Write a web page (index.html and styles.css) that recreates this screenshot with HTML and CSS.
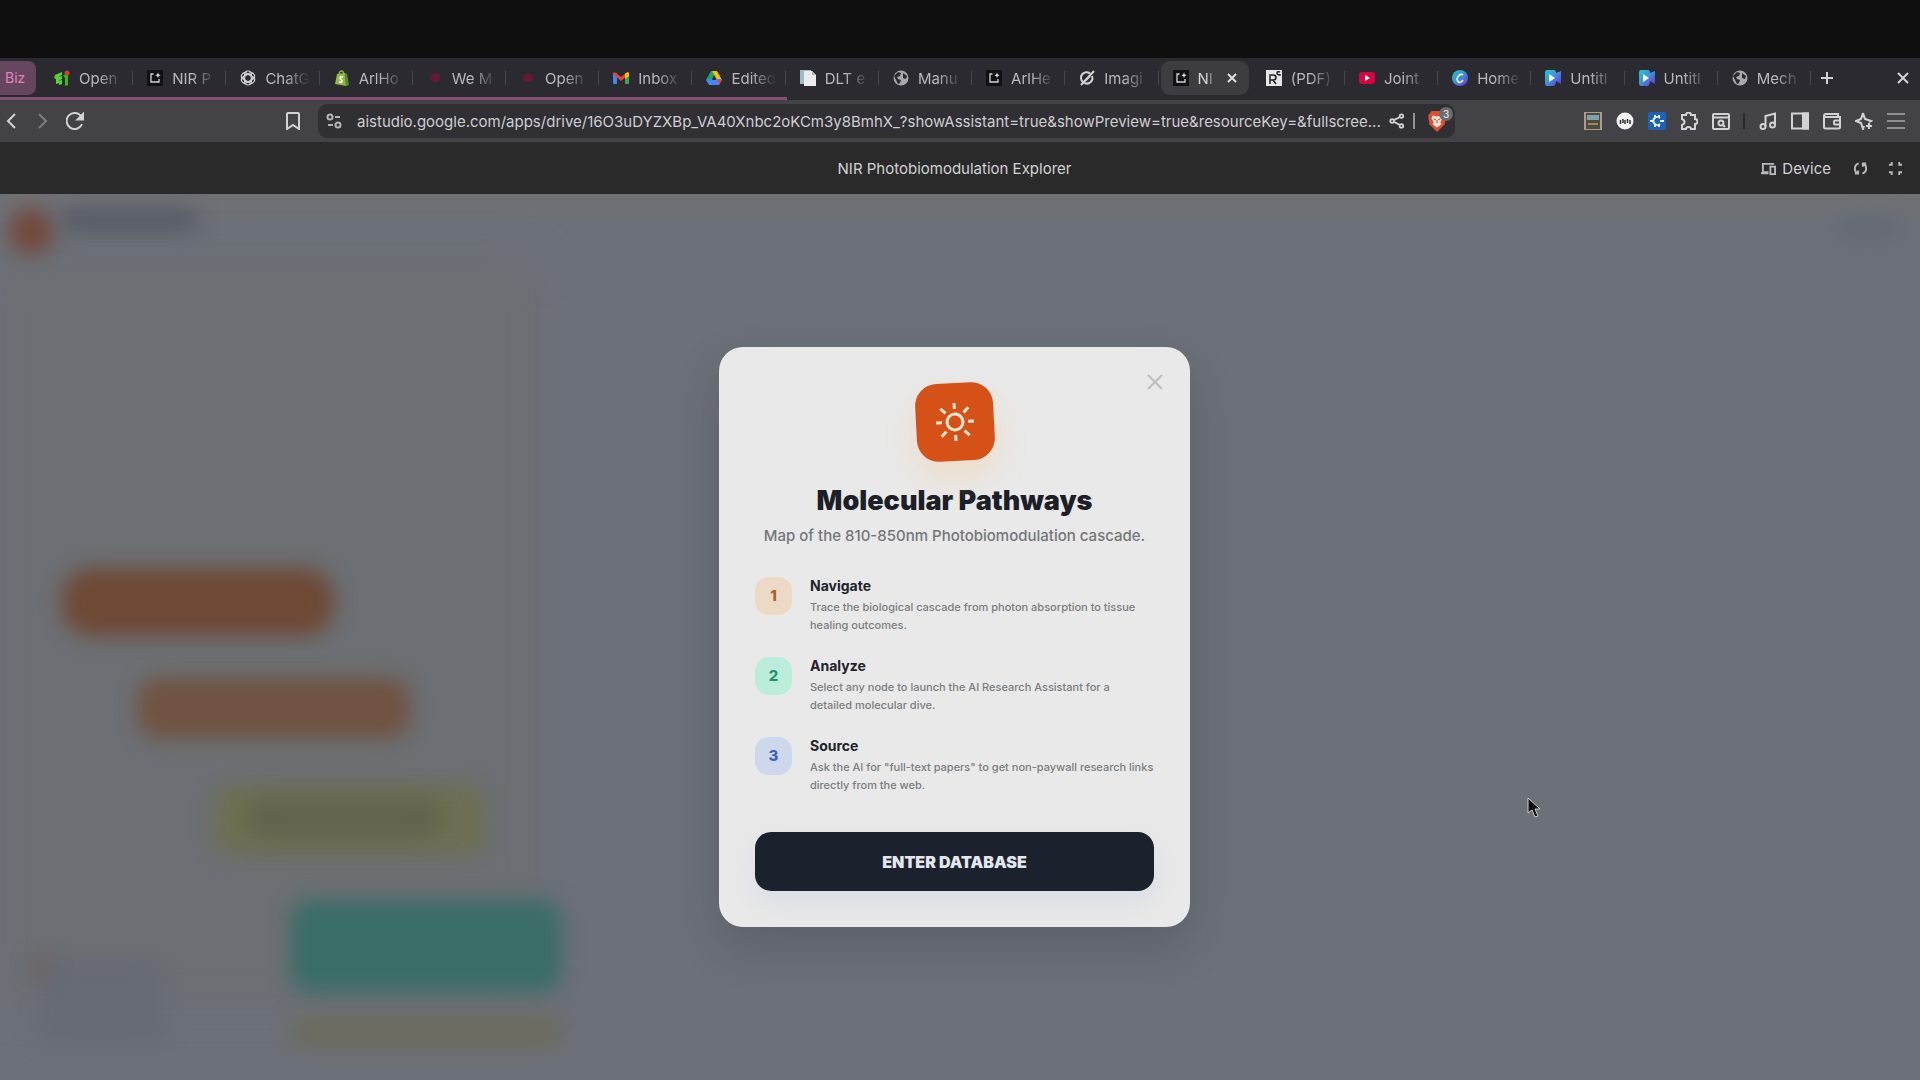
FILE: index.html
```html
<!DOCTYPE html>
<html lang="en">
<head>
  <meta charset="UTF-8">
  <meta name="viewport" content="width=device-width, initial-scale=1.0">
  <title>NIR Photobiomodulation Explorer</title>
  <link rel="stylesheet" href="styles.css">
</head>
<body>
  <!-- shared icons -->
  <svg class="defs" width="0" height="0" aria-hidden="true">
    <defs>
      <linearGradient id="canva" x1="0" y1="0" x2="1" y2="1">
        <stop offset="0" stop-color="#22c7cf"/>
        <stop offset="0.5" stop-color="#3f8fd8"/>
        <stop offset="1" stop-color="#7426dd"/>
      </linearGradient>
      <symbol id="i-globe" viewBox="0 0 16 16">
        <circle cx="8" cy="8" r="7.500" fill="#a9a9ac"/>
        <path d="M1 6l4-4 3 1-1 3-3 1 1 2 3 1-1 3-2 1zM10 3l4 3-1 3-3-1z" fill="#2b2a30"/>
      </symbol>
      <symbol id="i-studio" viewBox="0 0 16 16">
        <rect width="16" height="16" fill="#111113"/>
        <path d="M6.500 4H4v8h8V9" fill="none" stroke="#d4d4d6" stroke-width="1.300"/>
        <path d="M11 2.500l.8 1.900 1.900.8-1.900.8-.8 1.900-.8-1.900L8.300 5.200l1.900-.8z" fill="#e5e5e6"/>
      </symbol>
      <symbol id="i-maple" viewBox="0 0 16 16">
        <path d="M8 2l2 3 3-1-1 4 2 1-4 3H6L2 9l2-1-1-4 3 1z" fill="#651a30"/>
      </symbol>
      <symbol id="i-video" viewBox="0 0 16 16">
        <path d="M2 0h7q2 0 2 3l5-2v13l-5-3q0 5-3 5H2q-2 0-2-3V3q0-3 2-3z" fill="url(#canva)"/>
        <path d="M4 4v8l6-4z" fill="#fff"/>
      </symbol>
    </defs>
  </svg>

  <header class="browser">
    <div class="tab-strip">
      <span class="tab-group">Biz</span>
      <nav class="tabs" aria-label="Open tabs">
        <a class="tab" href="#"><svg class="favicon" viewBox="0 0 16 16"><path d="M1 5l7-3v3L4 7l4-1v3L4 11l4-1v4l-3 1v-2l-3 1V9L0 8z" fill="#56d52e"/><path d="M9 5l5-1v11l-3 1V8z" fill="#3cb424"/><circle cx="13" cy="3" r="2.500" fill="#d83b2c"/></svg><span>Open</span></a>
        <a class="tab" href="#"><svg class="favicon"><use href="#i-studio"/></svg><span>NIR P</span></a>
        <a class="tab" href="#"><svg class="favicon" viewBox="0 0 16 16" fill="none" stroke="#d0d0d2" stroke-width="1.200"><rect x="4.500" y="1" width="7" height="11" rx="3.500"/><rect x="4.500" y="1" width="7" height="11" rx="3.500" transform="rotate(60 8 8)"/><rect x="4.500" y="1" width="7" height="11" rx="3.500" transform="rotate(120 8 8)"/><rect x="4.500" y="1" width="7" height="11" rx="3.500" transform="rotate(180 8 8)"/><rect x="4.500" y="1" width="7" height="11" rx="3.500" transform="rotate(240 8 8)"/><rect x="4.500" y="1" width="7" height="11" rx="3.500" transform="rotate(300 8 8)"/></svg><span>ChatG</span></a>
        <a class="tab" href="#"><svg class="favicon" viewBox="0 0 16 16"><path d="M3 4l8-1 1 13-11-2z" fill="#8fb845"/><path d="M11 3l2 1 2 11-3 1z" fill="#5a8a34"/><path d="M5 5q0-4 3-4 1 0 2 3" fill="none" stroke="#8fb845" stroke-width="1.300"/><path d="M9 7q-3-1-3 1c0 2 2 1 2 3q0 2-3 1" fill="none" stroke="#fff" stroke-width="1.500"/></svg><span>ArlHo</span></a>
        <a class="tab" href="#"><svg class="favicon"><use href="#i-maple"/></svg><span>We M</span></a>
        <a class="tab" href="#"><svg class="favicon"><use href="#i-maple"/></svg><span>Open</span></a>
        <a class="tab" href="#"><svg class="favicon" viewBox="0 0 16 16"><path d="M0 3h4v11H1q-1 0-1-1z" fill="#4285f4"/><path d="M12 3h4v10q0 1-1 1h-3z" fill="#34a853"/><path d="M0 4q0-3 3-1l5 4 5-4q3-2 3 1l-8 7z" fill="#ea4335"/><path d="M12 4l1-1q3-2 3 1v2l-4 3z" fill="#fbbc04"/></svg><span>Inbox</span></a>
        <a class="tab" href="#"><svg class="favicon" viewBox="0 0 16 16"><path d="M5 1h5L4 14 0 10z" fill="#1fa463"/><path d="M6 1h5l5 9h-5z" fill="#fbbc04"/><path d="M0 10l3-1h13l-3 6H3z" fill="#4285f4"/><path d="M11.500 10H16l-3 5z" fill="#ea4335"/><path d="M8 6l2 4H6z" fill="#2b2a30"/></svg><span>Edited</span></a>
        <a class="tab" href="#"><svg class="favicon" viewBox="0 0 16 16"><path d="M0 0h11v14H0z" fill="#9dbdca"/><path d="M4 1h8l4 4v11H4z" fill="#ececee"/><path d="M12 1v4h4z" fill="#b2b5bb"/></svg><span>DLT e</span></a>
        <a class="tab" href="#"><svg class="favicon"><use href="#i-globe"/></svg><span>Manu</span></a>
        <a class="tab" href="#"><svg class="favicon"><use href="#i-studio"/></svg><span>ArlHe</span></a>
        <a class="tab" href="#"><svg class="favicon" viewBox="0 0 16 16" fill="none" stroke="#d4d4d6" stroke-width="2"><path d="M11 3.500A5.500 5.500 0 0 0 4 12M13 6a5.500 5.500 0 0 1-7.500 7M2 15L15 1M6 11l5-5"/></svg><span>Imagi</span></a>
        <a class="tab active" href="#"><svg class="favicon"><use href="#i-studio"/></svg><span>NI</span><svg class="tab-close" viewBox="0 0 10 10"><path d="M1 1l8 8M9 1L1 9"/></svg></a>
        <a class="tab" href="#"><svg class="favicon" viewBox="0 0 16 16"><rect width="16" height="16" fill="#e6e6e6"/><path d="M4 14V5h3q3 0 3 2.500T7 10H4m3 0l3 4M14 2q-3-1-3 1t3 2V4" fill="none" stroke="#222" stroke-width="1.500"/></svg><span>(PDF)</span></a>
        <a class="tab" href="#"><svg class="favicon" viewBox="0 0 16 16"><rect y="2" width="16" height="12" rx="3" fill="#d4053f"/><path d="M6 5v6l5-3z" fill="#fff"/></svg><span>Joint</span></a>
        <a class="tab" href="#"><svg class="favicon" viewBox="0 0 16 16"><circle cx="8" cy="8" r="8" fill="url(#canva)"/><path d="M11 5Q9 3 6.500 6T6 11.500 11 10" fill="none" stroke="#fff" stroke-width="1.500"/></svg><span>Home</span></a>
        <a class="tab" href="#"><svg class="favicon"><use href="#i-video"/></svg><span>Untitl</span></a>
        <a class="tab" href="#"><svg class="favicon"><use href="#i-video"/></svg><span>Untitl</span></a>
        <a class="tab" href="#"><svg class="favicon"><use href="#i-globe"/></svg><span>Mech</span></a>
      </nav>
      <div class="window-buttons">
        <button class="icon-btn" aria-label="New tab"><svg viewBox="0 0 18 18"><path d="M9 3v12M3 9h12"/></svg></button>
        <button class="icon-btn" aria-label="Close window"><svg viewBox="0 0 18 18"><path d="M4 4l10 10M14 4L4 14"/></svg></button>
      </div>
    </div>

    <div class="toolbar">
      <div class="nav-buttons">
        <button class="icon-btn" aria-label="Back"><svg viewBox="0 0 18 18"><path d="M13 2L6 9l7 7"/></svg></button>
        <button class="icon-btn dim" aria-label="Forward"><svg viewBox="0 0 18 18"><path d="M5 2l7 7-7 7"/></svg></button>
        <button class="icon-btn" aria-label="Reload"><svg viewBox="0 0 18 18"><path d="M15.500 5A8 8 0 1 0 16 12"/><path d="M17 2v5.500h-5.500z" fill="currentColor"/></svg></button>
        <button class="icon-btn bookmark" aria-label="Bookmark"><svg viewBox="0 0 18 18"><path d="M3 2q0-1 1-1h10q1 0 1 1v15l-6-4-6 4z"/></svg></button>
      </div>
      <div class="address">
        <svg class="site-info" viewBox="0 0 16 16"><circle cx="4" cy="4" r="2.500"/><path d="M9 4h5M2 12h5"/><circle cx="12" cy="12" r="2.500"/></svg>
        <input type="text" aria-label="Address" value="aistudio.google.com/apps/drive/16O3uDYZXBp_VA40Xnbc2oKCm3y8BmhX_?showAssistant=true&amp;showPreview=true&amp;resourceKey=&amp;fullscree...">
        <button class="icon-btn share" aria-label="Share"><svg viewBox="0 0 18 18"><circle cx="3.500" cy="9" r="2"/><circle cx="14" cy="3.500" r="2"/><circle cx="14" cy="14.500" r="2"/><path d="M5.500 8l7-3.500M5.500 10l7 3.500"/></svg></button>
        <span class="divider"></span>
        <button class="shield" aria-label="Shields">
          <svg viewBox="0 0 18 20"><path d="M4 1h10l3 4-1 8-7 7-7-7-1-8z" fill="#d9502b"/><path d="M5 5l4 1 4-1 1 3-2 3 1 2-4 3-4-3 1-2-2-3z" fill="#f6e3dc"/><path d="M6 8l2 1M12 8l-2 1M9 9v3" stroke="#d9502b"/></svg>
          <span class="badge">3</span>
        </button>
      </div>
      <div class="extensions">
        <button class="icon-btn solid" aria-label="Reader"><svg viewBox="0 0 18 18"><rect width="18" height="18" fill="#b39b83"/><rect x="2" y="1" width="14" height="16" fill="#4b4a45"/><rect x="3" y="3" width="12" height="5" fill="#80a0ad"/><path d="M4 11h10v2H4z" fill="#a28a41"/></svg></button>
        <button class="icon-btn solid" aria-label="Audio"><svg viewBox="0 0 18 18"><circle cx="9" cy="9" r="8.500" fill="#f1f1f1"/><path d="M4.500 12V8M7 11V7M9 12V8M11.500 11V7M14 12V8" stroke="#333" stroke-width="1.500"/></svg></button>
        <button class="icon-btn solid" aria-label="Capture"><svg viewBox="0 0 18 18"><rect width="18" height="18" rx="2" fill="#1d62b8"/><path d="M12 6a4 4 0 1 0 0 6M7 3v3M7 12v3M2 9h3M12 9h4M11 3v3M11 12v3" stroke="#e4f0fb" stroke-width="2"/></svg></button>
        <button class="icon-btn" aria-label="Extensions"><svg viewBox="0 0 18 18"><path d="M2 3h4q0-2.500 2.500-2.500T11 3h4v4q2.500 0 2.500 2.500T15 12v5h-4q0-2-2.500-2T6 17H2v-4q2.500-1 2.500-3T2 7z"/></svg></button>
        <button class="icon-btn" aria-label="Search page"><svg viewBox="0 0 18 18"><rect x="1" y="2" width="16" height="15" rx="1"/><path d="M1 5.500h16M11 13l2 2"/><circle cx="9" cy="11" r="2.500"/></svg></button>
        <span class="divider"></span>
        <button class="icon-btn" aria-label="Media"><svg viewBox="0 0 18 18"><path d="M6.500 14.500V4L16 1.500V13"/><circle cx="4" cy="14.500" r="2.500"/><circle cx="13.500" cy="13" r="2.500"/></svg></button>
        <button class="icon-btn" aria-label="Sidebar"><svg viewBox="0 0 18 18"><rect x="1" y="1.500" width="16" height="15"/><path d="M12 1.500h5v15h-5z" fill="currentColor"/></svg></button>
        <button class="icon-btn" aria-label="Wallet"><svg viewBox="0 0 18 18"><path d="M15 5V2H3Q1 2 1 4v11q0 1.500 2 1.500h12q2 0 2-1.500V5H3Q1 5 1 3.500M17 8.500h-5q-1 0-1 1v2q0 1 1 1h5"/></svg></button>
        <button class="icon-btn" aria-label="Assistant"><svg viewBox="0 0 18 18"><path d="M8 1l2 6 6 2-2 1M8 1L6 7 1 9l5 2 2 6 1-3M14 11v6M11 14h6"/></svg></button>
        <button class="icon-btn menu" aria-label="Menu"><svg viewBox="0 0 18 18"><path d="M0 2h18M0 9h18M0 16h18"/></svg></button>
      </div>
    </div>
  </header>

  <div class="app-bar">
    <h1>NIR Photobiomodulation Explorer</h1>
    <div class="app-actions">
      <button class="device"><svg viewBox="0 0 16 16"><path d="M14 3H2v9h6M0 13h8"/><rect x="10" y="6" width="5" height="8"/></svg>Device</button>
      <button class="icon-btn" aria-label="Refresh"><svg viewBox="0 0 16 16"><path d="M6 2.500Q2 4 2 8t3 5.500M2 13.500h3.500V10M10 13.500q4-1.500 4-5.500T11 2.500M14 2.500h-3.500V6"/></svg></button>
      <button class="icon-btn" aria-label="Exit full screen"><svg viewBox="0 0 16 16"><path d="M4 1v3H1M12 1v3h3M4 15v-3H1M12 15v-3h3"/></svg></button>
    </div>
  </div>

  <main class="stage">
    <!-- pathway map behind the overlay -->
    <div class="map" aria-hidden="true">
      <div class="blob lane"></div>
      <div class="blob logo"></div>
      <div class="blob brand"></div>
      <div class="blob user"></div>
      <div class="blob node photon"></div>
      <div class="blob node absorb"></div>
      <div class="blob node signal"></div>
      <div class="blob node signal-text"></div>
      <div class="blob node tissue"></div>
      <div class="blob node next"></div>
      <div class="blob legend"></div>
      <div class="blob dot"></div>
    </div>

    <section class="modal" role="dialog" aria-labelledby="modal-title">
      <button class="close" aria-label="Close"><svg viewBox="0 0 16 16"><path d="M1 1l14 14M15 1L1 15"/></svg></button>
      <div class="sun">
        <svg viewBox="0 0 40 40"><circle cx="20" cy="20" r="8"/><path d="M20 1v6M20 33v6M1 20h6M33 20h6M6 6l5 5M29 29l5 5M6 34l5-5M29 11l5-5"/></svg>
      </div>
      <h2 id="modal-title">Molecular Pathways</h2>
      <p class="subtitle">Map of the 810-850nm Photobiomodulation cascade.</p>
      <ol class="steps">
        <li>
          <span class="num orange">1</span>
          <div>
            <h3>Navigate</h3>
            <p>Trace the biological cascade from photon absorption to tissue healing outcomes.</p>
          </div>
        </li>
        <li>
          <span class="num green">2</span>
          <div>
            <h3>Analyze</h3>
            <p>Select any node to launch the AI Research Assistant for a detailed molecular dive.</p>
          </div>
        </li>
        <li>
          <span class="num blue">3</span>
          <div>
            <h3>Source</h3>
            <p>Ask the AI for "full-text papers" to get non-paywall research links directly from the web.</p>
          </div>
        </li>
      </ol>
      <button class="enter">ENTER DATABASE</button>
    </section>

    <svg class="cursor" viewBox="0 0 14 22" aria-hidden="true"><path d="M1 1v15l4-3 3 7 3-1-3-7h5z"/></svg>
  </main>
</body>
</html>
```
FILE: styles.css
```css
* {
  box-sizing: border-box;
}
body {
  margin: 0;
  min-height: 100vh;
  display: flex;
  flex-direction: column;
  padding-top: 58px;
  background: #0f0f0f;
  font-family: Inter, "Liberation Sans", sans-serif;
  color: #d2d2d4;
}
h1, h2, h3, p, ol {
  margin: 0;
  padding: 0;
}
button {
  border: none;
  background: none;
  padding: 0;
  color: inherit;
  font-family: inherit;
  cursor: pointer;
}
svg {
  flex: none;
}
.defs {
  position: absolute;
}
.icon-btn {
  display: flex;
}
.icon-btn svg {
  width: 18px;
  height: 18px;
  fill: none;
  stroke: currentColor;
  stroke-width: 2;
}
.icon-btn.solid svg {
  stroke: none;
}
.icon-btn.dim {
  color: #7d7c80;
}

/* Tab strip */
.tab-strip {
  display: flex;
  align-items: center;
  height: 42px;
  padding-bottom: 2px;
  background: linear-gradient(#855078, #855078) left bottom / 41% 3px no-repeat #2b2a30;
}
.tab-group {
  width: 36px;
  height: 34px;
  line-height: 34px;
  padding-left: 5px;
  border-radius: 0 8px 8px 0;
  background: #65465f;
  color: #e283b8;
  font-size: 14px;
}
.tabs {
  flex: 1;
  display: grid;
  grid-auto-flow: column;
  grid-auto-columns: minmax(0, 1fr);
  gap: 5px;
  min-width: 0;
  margin-left: 6px;
}
.tab {
  position: relative;
  height: 34px;
  display: flex;
  align-items: center;
  gap: 9px;
  padding: 0 2px 0 12px;
  border-radius: 9px;
  color: #b9b9bc;
  font-size: 15px;
  text-decoration: none;
}
.tab::after {
  content: "";
  position: absolute;
  right: -3px;
  width: 1px;
  height: 14px;
  background: #47464b;
}
.tab span {
  flex: 1;
  overflow: hidden;
  white-space: nowrap;
  mask-image: linear-gradient(to right, #000 40%, transparent 90%);
}
.tab.active {
  padding-right: 12px;
  background: #3d3c41;
  color: #d8d8da;
}
.tab.active::after {
  display: none;
}
.favicon {
  width: 16px;
  height: 16px;
}
.tab-close {
  width: 10px;
  height: 10px;
  stroke: #dededf;
  stroke-width: 2;
}
.window-buttons {
  display: flex;
  justify-content: space-between;
  width: 112px;
  padding: 0 8px 0 10px;
}

/* Toolbar */
.toolbar {
  display: flex;
  align-items: center;
  height: 42px;
  background: #434246;
}
.nav-buttons {
  display: flex;
  gap: 14px;
  width: 318px;
  padding: 0 16px 0 2px;
}
.bookmark {
  margin-left: auto;
}
.address {
  flex: 1;
  display: flex;
  align-items: center;
  height: 34px;
  padding: 0 8px;
  border-radius: 9px;
  background: #302f34;
}
.site-info {
  width: 16px;
  height: 16px;
  margin-right: 15px;
  fill: none;
  stroke: #b4b4b7;
  stroke-width: 2;
}
.address input {
  flex: 1;
  min-width: 0;
  padding: 0;
  border: none;
  outline: none;
  background: none;
  color: #cececf;
  font-family: inherit;
  font-size: 15px;
}
.share svg {
  width: 16px;
  height: 16px;
}
.divider {
  width: 2px;
  height: 16px;
  background: #929295;
}
.address .divider {
  margin: 0 12px 0 8px;
}
.shield {
  position: relative;
  display: flex;
}
.shield svg {
  width: 20px;
  height: 22px;
}
.badge {
  position: absolute;
  top: -3px;
  right: -6px;
  width: 14px;
  height: 14px;
  border-radius: 7px;
  background: #6a6b72;
  color: #eee;
  font-size: 10px;
  line-height: 14px;
}
.extensions {
  display: flex;
  align-items: center;
  justify-content: space-between;
  width: 465px;
  padding: 0 15px 0 129px;
}
.extensions .divider {
  background: #29282c;
}
.menu {
  color: #8f8f92;
}

/* App bar */
.app-bar {
  display: grid;
  grid-template-columns: 1fr auto 1fr;
  align-items: center;
  height: 52px;
  padding: 0 17px 0 6px;
  background: #2a2a2b;
}
.app-bar h1 {
  grid-column: 2;
  font-size: 15px;
  font-weight: 400;
}
.app-actions {
  display: flex;
  justify-content: flex-end;
  align-items: center;
  gap: 20px;
}
.device {
  display: flex;
  align-items: center;
  gap: 6px;
  margin-right: 2px;
  font-size: 15px;
}
.app-actions svg {
  width: 15px;
  height: 15px;
  fill: none;
  stroke: #b9b9bb;
  stroke-width: 2;
}

/* Blurred map */
.stage {
  position: relative;
  flex: 1;
  display: flex;
  align-items: center;
  justify-content: center;
  padding: 36px 11px 36px 0;
  overflow: hidden;
  background: linear-gradient(#707174, #6c7078 30px);
}
.map {
  position: absolute;
  inset: 0;
}
.blob {
  position: absolute;
  border-radius: 20px;
  filter: blur(10px);
}
.lane {
  left: 0;
  top: 66px;
  width: 540px;
  height: 740px;
  background: #6c6f73;
  filter: blur(20px);
}
.logo {
  left: 9px;
  top: 14px;
  width: 44px;
  height: 46px;
  background: #734a3e;
}
.brand {
  left: 60px;
  top: 14px;
  width: 138px;
  height: 24px;
  background: #575b66;
}
.user {
  right: 18px;
  top: 22px;
  width: 66px;
  height: 24px;
  background: #656a73;
}
.node {
  width: 272px;
}
.photon {
  left: 62px;
  top: 374px;
  height: 68px;
  border-radius: 30px;
  background: #6e4936;
}
.absorb {
  left: 138px;
  top: 484px;
  height: 60px;
  background: #705342;
}
.signal {
  left: 214px;
  top: 591px;
  height: 70px;
  background: #6e6f53;
}
.signal-text {
  left: 246px;
  top: 604px;
  width: 196px;
  height: 40px;
  background: #62644e;
}
.tissue {
  left: 290px;
  top: 706px;
  height: 92px;
  background: #3a6d67;
}
.next {
  left: 290px;
  top: 822px;
  height: 32px;
  background: #6c6c5d;
}
.legend {
  left: 36px;
  top: 766px;
  width: 130px;
  height: 84px;
  background: #676b74;
}
.dot {
  left: 32px;
  top: 764px;
  width: 20px;
  height: 20px;
  background: #705f62;
}

/* Modal */
.modal {
  position: relative;
  width: 471px;
  padding: 36px;
  border-radius: 24px;
  background: #e9e9e9;
  box-shadow: 0 20px 48px rgba(30, 35, 45, 0.2);
  text-align: center;
}
.close {
  position: absolute;
  top: 27px;
  right: 27px;
  display: flex;
}
.close svg {
  width: 16px;
  height: 16px;
  stroke: #bdbec1;
  stroke-width: 2;
}
.sun {
  display: flex;
  align-items: center;
  justify-content: center;
  width: 78px;
  height: 78px;
  margin: 0 auto 20px;
  border-radius: 22px;
  background: #d55118;
  box-shadow: 0 16px 28px rgba(250, 200, 140, 0.35);
  transform: rotate(-3deg);
}
.sun svg {
  width: 40px;
  height: 40px;
  fill: none;
  stroke: #fce8d2;
  stroke-width: 3;
}
.modal h2 {
  color: #1c1f27;
  font-size: 27px;
  font-weight: 900;
  line-height: 40px;
}
.subtitle {
  margin-top: 3px;
  color: #74767a;
  font-size: 15px;
  font-weight: 500;
  line-height: 24px;
}
.steps {
  display: flex;
  flex-direction: column;
  gap: 22px;
  margin-top: 28px;
  list-style: none;
  text-align: left;
}
.steps li {
  display: flex;
  gap: 18px;
}
.num {
  flex: none;
  width: 37px;
  height: 38px;
  margin-top: 1px;
  border-radius: 14px;
  font-size: 15px;
  font-weight: 800;
  line-height: 38px;
  text-align: center;
}
.num.orange {
  background: #ecdac6;
  color: #ad5d28;
}
.num.green {
  background: #baeeda;
  color: #23936f;
}
.num.blue {
  background: #cdd8ec;
  color: #3e60c4;
}
.steps h3 {
  color: #202329;
  font-size: 14px;
  font-weight: 700;
  line-height: 20px;
}
.steps p {
  margin-top: 2px;
  color: #7b7d81;
  font-size: 11px;
  font-weight: 500;
  line-height: 18px;
}
.enter {
  display: block;
  width: 100%;
  height: 59px;
  margin-top: 38px;
  border-radius: 16px;
  background: #1c222d;
  box-shadow: 0 12px 24px rgba(200, 205, 225, 0.4);
  color: #e4e7ee;
  font-size: 16px;
  font-weight: 900;
}
.cursor {
  position: absolute;
  left: 1527px;
  top: 603px;
  width: 14px;
  height: 22px;
  fill: #101010;
  stroke: #c9cacc;
}
```
